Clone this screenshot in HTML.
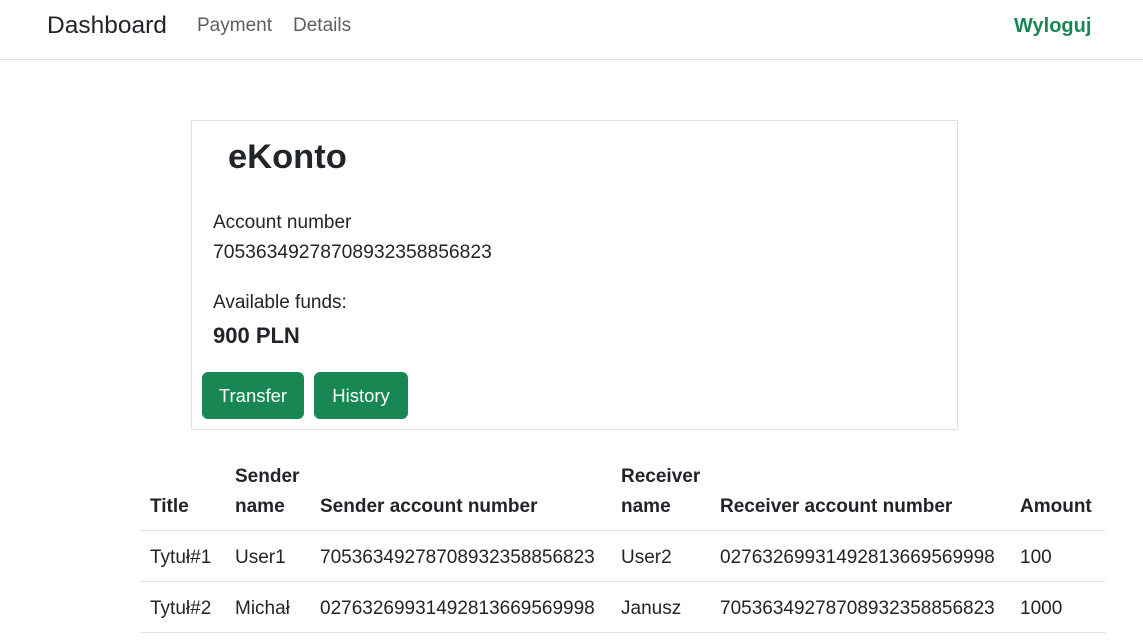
<!DOCTYPE html>
<html><head><meta charset="utf-8"><style>
*{margin:0;padding:0;box-sizing:border-box}
body{width:1143px;height:641px;overflow:hidden;background:#fff;font-family:"Liberation Sans",sans-serif;color:#212529;position:relative}
.a{position:absolute;white-space:nowrap}
.nav{position:absolute;left:0;top:0;width:1143px;height:60px;border-bottom:1px solid #dee2e6}
.card{position:absolute;left:191px;top:120px;width:767px;height:310px;border:1px solid #dee2e6}
.btn{position:absolute;top:372px;height:47px;background:#198754;color:#fff;border-radius:6px;font-size:18.5px;line-height:48px;text-align:center}
.hl{position:absolute;left:140px;width:966px;height:1px;background:#dee2e6}
.th{font-weight:bold;font-size:19px;line-height:22px}
.td{font-size:19px;line-height:22px}
</style></head><body>
<div class="nav"></div>
<div class="a" style="left:47px;top:11px;font-size:24.5px;line-height:30px">Dashboard</div>
<div class="a" style="left:197px;top:15px;font-size:19px;color:#5c5f62;line-height:22px">Payment</div>
<div class="a" style="left:293px;top:15px;font-size:19px;color:#5c5f62;line-height:22px">Details</div>
<div class="a" style="left:1014px;top:15px;font-size:20px;font-weight:bold;color:#198754;line-height:22px">Wyloguj</div>
<div class="card"></div>
<div class="a" style="left:228px;top:137px;font-size:34.5px;font-weight:bold;line-height:40px">eKonto</div>
<div class="a" style="left:213px;top:212px;font-size:19px;line-height:22px">Account number</div>
<div class="a" style="left:213px;top:242px;font-size:19.3px;line-height:22px">70536349278708932358856823</div>
<div class="a" style="left:213px;top:292px;font-size:19px;line-height:22px">Available funds:</div>
<div class="a" style="left:213px;top:323px;font-size:22px;font-weight:bold;line-height:26px">900 PLN</div>
<div class="btn" style="left:202px;width:102px">Transfer</div>
<div class="btn" style="left:314px;width:94px">History</div>
<div class="a th" style="left:235px;top:466px">Sender</div>
<div class="a th" style="left:621px;top:466px">Receiver</div>
<div class="a th" style="left:150px;top:496px">Title</div>
<div class="a th" style="left:235px;top:496px">name</div>
<div class="a th" style="left:320px;top:496px">Sender account number</div>
<div class="a th" style="left:621px;top:496px">name</div>
<div class="a th" style="left:720px;top:496px">Receiver account number</div>
<div class="a th" style="left:1020px;top:496px">Amount</div>
<div class="hl" style="top:530px"></div>
<div class="a td" style="left:150px;top:547px">Tytuł#1</div>
<div class="a td" style="left:235px;top:547px">User1</div>
<div class="a td" style="left:320px;top:547px">70536349278708932358856823</div>
<div class="a td" style="left:621px;top:547px">User2</div>
<div class="a td" style="left:720px;top:547px">02763269931492813669569998</div>
<div class="a td" style="left:1020px;top:547px">100</div>
<div class="hl" style="top:581px"></div>
<div class="a td" style="left:150px;top:598px">Tytuł#2</div>
<div class="a td" style="left:235px;top:598px">Michał</div>
<div class="a td" style="left:320px;top:598px">02763269931492813669569998</div>
<div class="a td" style="left:621px;top:598px">Janusz</div>
<div class="a td" style="left:720px;top:598px">70536349278708932358856823</div>
<div class="a td" style="left:1020px;top:598px">1000</div>
<div class="hl" style="top:632px"></div>
</body></html>
